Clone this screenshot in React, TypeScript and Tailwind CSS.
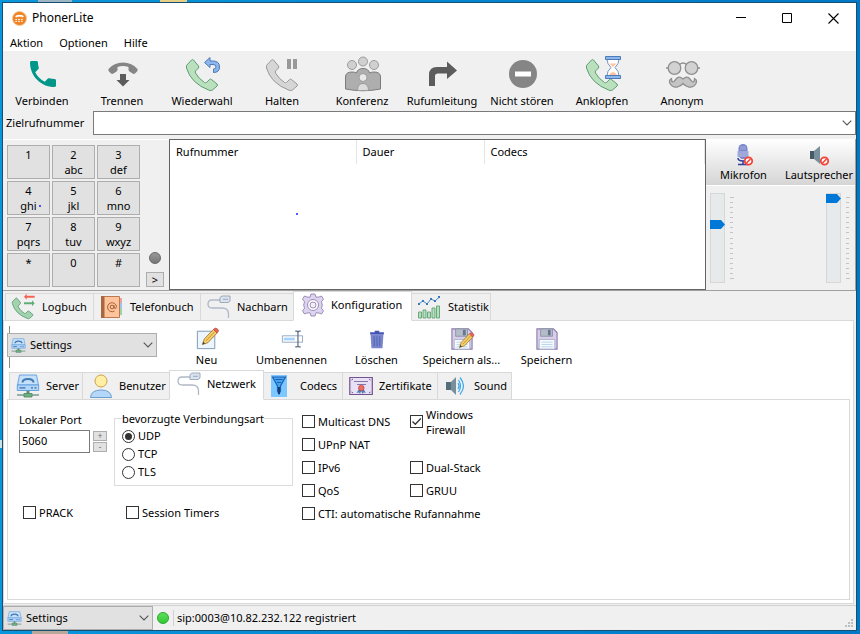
import { useState, type ReactNode } from "react";

const HANDSET =
  "M2.5 9.5 L7.5 4 Q8.5 3 9.500 4 L14.500 10 Q15 11 14.500 12 L11.500 15 Q11 16 11.500 17 Q15 23 20.500 26.500 Q21.500 27 22.500 26.500 L25.500 23.500 Q26.500 22.500 27.500 23.500 L33 28 Q34 29 33 30 L28.500 34 Q27 35 25 34.200 Q7 27.500 2.500 12 Z";

function Icon({ size, box, children, className = "" }: { size: number; box: number; children: ReactNode; className?: string }) {
  return (
    <svg width={size} height={size} viewBox={`0 0 ${box} ${box}`} className={`shrink-0 overflow-visible ${className}`} fill="none" aria-hidden="true">
      {children}
    </svg>
  );
}

const Handset = ({ fill, stroke }: { fill: string; stroke: string }) => <path d={HANDSET} fill={fill} stroke={stroke} strokeWidth="1" />;

const callActions: { label: string; icon: ReactNode }[] = [
  {
    label: "Verbinden",
    icon: (
      <g transform="translate(6 5) scale(1.445) translate(-3 -3)">
        <path
          fill="#009688"
          d="M6.620 10.790c1.440 2.830 3.760 5.140 6.590 6.590l2.200-2.200c.27-.27.67-.36 1.020-.24 1.120.37 2.330.57 3.570.57.55 0 1 .45 1 1V20c0 .55-.45 1-1 1-9.390 0-17-7.610-17-17 0-.55.45-1 1-1h3.500c.55 0 1 .45 1 1 0 1.250.2 2.450.57 3.570.11.35.03.74-.25 1.020l-2.200 2.200z"
        />
      </g>
    ),
  },
  {
    label: "Trennen",
    icon: (
      <>
        <path d="M4.500 13 Q10 6.500 19 6.500 T33.500 13 Q34 14.500 33 15.500 L31 17.500 Q30 18.300 28.500 17.500 L25.500 15.500 Q24.500 14.800 24.500 13.500 V11 Q19 9.200 13.500 11 V13.500 Q13.500 14.800 12.500 15.500 L9.500 17.500 Q8 18.300 7 17.500 L5 15.500 Q4 14.500 4.500 13 Z" fill="#858585" />
        <path d="M16 18h6v6h3.500L19 30.500 12.500 24H16z" fill="#5c5c5c" />
      </>
    ),
  },
  {
    label: "Wiederwahl",
    icon: (
      <>
        <Handset fill="#bae0bd" stroke="#5e9c76" />
        <path d="M20.500 6.500 L26 1.500 V5 H29 Q35.500 5 35.500 11 Q35.500 16.500 29.500 16.500 V13 Q32 13 32 11 Q32 8.500 29 8.500 H26 V11.500 Z" fill="#8bb7f0" stroke="#4e7ab5" />
      </>
    ),
  },
  {
    label: "Halten",
    icon: (
      <>
        <Handset fill="#d6d6d6" stroke="#999" />
        <path d="M23 3h4v10h-4zM29 3h4v10h-4z" fill="#999" />
      </>
    ),
  },
  {
    label: "Konferenz",
    icon: (
      <g stroke="#9b9b9b">
        <circle cx="8" cy="9" r="4.500" fill="#d0d0d0" />
        <circle cx="30" cy="9" r="4.500" fill="#d0d0d0" />
        <circle cx="19" cy="5.500" r="4.500" fill="#d0d0d0" />
        <path d="M1.500 33 V21 Q1.500 16 8 16 Q10.500 16 12.500 17 Q13.500 12.500 19 12.500 T25.500 17 Q27.500 16 30 16 Q36.500 16 36.500 21 V33 Q19 36.500 1.500 33Z" fill="#aeaeae" stroke="#7b7b7b" />
        <circle cx="19" cy="21.500" r="4" fill="#e9e9e9" />
        <path d="M13.500 34.500 Q13.500 27.500 19 27.500 T24.500 34.500 Z" fill="#dcdcdc" />
      </g>
    ),
  },
  {
    label: "Rufumleitung",
    icon: <path d="M5 30 V19 Q5 11 13 11 H23 V5.500 L33 14.500 23 23 V17.500 H14 Q11 17.500 11 20 V30Z" fill="#5c5c5c" />,
  },
  {
    label: "Nicht stören",
    icon: (
      <>
        <circle cx="19" cy="18" r="14" fill="#858585" />
        <path d="M11 15.500h16v5H11z" fill="#fff" />
      </>
    ),
  },
  {
    label: "Anklopfen",
    icon: (
      <>
        <Handset fill="#bae0bd" stroke="#5e9c76" />
        <path d="M23 3 H35 Q35 8 31 11.500 Q35 15 35 20 H23 Q23 15 27 11.500 Q23 8 23 3Z" fill="#fff" stroke="#7496c4" />
        <path d="M25.500 7.500h7L29 11zM25 19q4-6 8 0z" fill="#ffc49c" />
        <path d="M21.500 .5h15v3h-15zM21.500 19.500h15v3h-15z" fill="#8bb7f0" stroke="#4e7ab5" />
      </>
    ),
  },
  {
    label: "Anonym",
    icon: (
      <g stroke="#8f8f8f" strokeWidth="1.300" fill="#d2d2d2">
        <circle cx="10.500" cy="12" r="6.300" />
        <circle cx="27.500" cy="12" r="6.300" />
        <path d="M15.500 8.500 Q19 5.500 22.500 8.500 M2 12h2.500M33.500 12H36" fill="none" />
        <path d="M19 23 Q15.500 20 13 22 L10 25.500 Q7.500 27 7.500 22.500 Q4.500 24 6 27.500 Q8.500 31.800 13.500 31 Q17 30 19 27.500 Q21 30 24.500 31 Q29.500 31.800 32 27.500 Q33.500 24 30.500 22.500 Q30.500 27 28 25.500 L25 22 Q22.500 20 19 23Z" fill="#c4c4c4" />
      </g>
    ),
  },
];

const NetworkIcon = () => (
  <Icon size={24} box={24}>
    <path d="M13 5 H5 Q1 5 1 9 Q1 13 5 13 H15 Q21.500 13 21.500 19 V23" stroke="#b0b9c7" strokeWidth="1.300" />
    <path d="M13 2.500 L15 1 H23 V6 L21 7.500 H13Z" fill="#dbe4ee" stroke="#8c9aae" strokeWidth=".8" />
    <path d="M16 4.300h5" stroke="#8c9aae" strokeWidth=".8" />
  </Icon>
);

const ServerIcon = ({ size }: { size: number }) => (
  <Icon size={size} box={24}>
    <path d="M1 21h22" stroke="#7d9a94" strokeWidth="1.500" />
    <path d="M12 16v4" stroke="#5f8f71" strokeWidth="3" />
    <path d="M8 19.500h8v3.500H8z" fill="#6fb183" stroke="#4b8560" strokeWidth=".8" />
    <path d="M3.500 1h17L22.500 11h-21z" fill="#c5e0fb" stroke="#5b9bdc" strokeWidth=".9" />
    <path d="M1.300 11h21.400v5.500H1.300z" fill="#b3d5f8" stroke="#5b9bdc" strokeWidth=".9" />
    <path d="M6.500 8.500 Q6.500 5 12 5 T17.500 8.500" stroke="#4479b0" strokeWidth="2" />
    <path d="M3.500 13.800h6M18.500 13.800h2M15 13.800h2" stroke="#3670b2" strokeWidth="1.300" />
  </Icon>
);

const Disk = () => (
  <>
    <path d="M1 1h18l4 4v18H1z" fill="#d9cdea" stroke="#8d7aad" strokeWidth="1.200" />
    <path d="M5 1h13v8H5z" fill="#b3bcc8" stroke="#8b95a5" />
    <path d="M13 2h3v6h-3z" fill="#66758d" />
    <path d="M3.500 12.500h17V23h-17z" fill="#f5f9fd" stroke="#a9b5c8" />
    <path d="M6 15.500h12M6 18h12M6 20.500h12" stroke="#b7d3ea" />
  </>
);

const Pencil = () => (
  <>
    <path d="M7 18 L9 12 L19 1.500 L23 5.500 L13 16Z" fill="#f7cf69" stroke="#a37c35" />
    <path d="M19 1.500 Q21 -1 23.500 1 T23 5.500Z" fill="#e9635b" stroke="#b64e4a" strokeWidth=".7" />
    <path d="M7 18l1-3 2 2z" fill="#35404b" />
    <path d="M11 14l9.500-10" stroke="#bd8c32" />
  </>
);

const mainTabs: { label: string; width: string; icon: ReactNode }[] = [
  {
    label: "Logbuch",
    width: "w-[89px]",
    icon: (
      <Icon size={24} box={36}>
        <g transform="translate(-2 1)">
          <Handset fill="#a3d3ae" stroke="#3f8b5d" />
        </g>
        <path d="M18 2.500 L22 -2 V1 H34 V4 H22 V7Z" fill="#f26352" />
        <path d="M34 12.500 L30 8 V11 H18 V14 H30 V17Z" fill="#60ad7a" />
      </Icon>
    ),
  },
  {
    label: "Telefonbuch",
    width: "w-[108px]",
    icon: (
      <Icon size={24} box={24}>
        <path d="M18 3h4v5h-4z" fill="#e8a0a0" />
        <path d="M18 8h4v6h-4z" fill="#9ac6ed" />
        <path d="M18 14h4v6h-4z" fill="#9ed1a8" />
        <path d="M1.500 1.500h18v21h-18z" fill="#ffc49c" stroke="#bd784e" />
        <path d="M1 1h3.500v22H1z" fill="#a9673f" />
        <circle cx="12" cy="12" r="1.800" stroke="#a65f35" />
        <path d="M14 10v3q2 1.500 2.500-1.500A4.500 4.500 0 1 0 14.500 16" stroke="#a65f35" />
      </Icon>
    ),
  },
  { label: "Nachbarn", width: "w-[94px]", icon: <NetworkIcon /> },
  {
    label: "Konfiguration",
    width: "w-[119px]",
    icon: (
      <Icon size={24} box={24}>
        <path d="M10 1h4l1 3.200 3-.2 2.500-1 2 3.200-2 2.500.8 3.300-.8 3.300 2 2.500-2 3.200-2.500-1-3-.2-1 3.200h-4l-1-3.200-3 .2-2.500 1-2-3.200 2-2.500L2.700 12l.8-3.300-2-2.500 2-3.200L6 4l3 .2z" fill="#dcd5f2" stroke="#8b75a1" strokeWidth=".8" />
        <circle cx="12" cy="12" r="5.500" fill="#fff" stroke="#8b75a1" strokeWidth=".8" />
        <circle cx="12" cy="12" r="3" fill="#f2edfa" stroke="#8b75a1" strokeWidth=".8" />
      </Icon>
    ),
  },
  {
    label: "Statistik",
    width: "w-[80px]",
    icon: (
      <Icon size={24} box={24}>
        <path d="M.5 17h3v6h-3zM5 15h3v8H5zM9.500 17h3v6h-3zM14 13h3v10h-3zM18.500 11h3v12h-3z" fill="#b5dfbc" stroke="#60a176" strokeWidth=".9" />
        <path d="M.5 9 L5 6 9 9 13 4 17 6 21.500 2" stroke="#4788c7" />
        <path d="M0 8h2v2H0zM4 5h2v2H4zM8 8h2v2H8zM12 3h2v2h-2zM16 5h2v2h-2zM20 1h2v2h-2z" fill="#3a78ba" />
      </Icon>
    ),
  },
];

const settingsTabs: { label: string; width: string; icon: ReactNode }[] = [
  { label: "Server", width: "w-[74px]", icon: <ServerIcon size={24} /> },
  {
    label: "Benutzer",
    width: "w-[88px]",
    icon: (
      <Icon size={24} box={24}>
        <path d="M1.500 23.500 Q2 16 12 16 T22.500 23.500Z" fill="#b5d8fa" stroke="#6c9fce" />
        <circle cx="12" cy="7" r="6" fill="#ffeea3" stroke="#c9a44b" />
      </Icon>
    ),
  },
  { label: "Netzwerk", width: "w-[95px]", icon: <NetworkIcon /> },
  {
    label: "Codecs",
    width: "w-[80px]",
    icon: (
      <Icon size={24} box={24}>
        <path d="M1 1h16v22H1z" fill="#7cc7ff" />
        <path d="M2.500 3 L7.500 12 V17 L9 20 L10.500 17 V12 L15.500 3Z" fill="#42a5f5" stroke="#1f5faf" strokeWidth="1.200" />
        <path d="M5.500 5.500h7M7 8.500h4" stroke="#1f5faf" />
        <path d="M9 13v7" stroke="#143d7a" strokeWidth="2" />
      </Icon>
    ),
  },
  {
    label: "Zertifikate",
    width: "w-[96px]",
    icon: (
      <Icon size={24} box={24}>
        <path d="M.8 3.500h22.500v17H.8z" fill="#e8e0f4" stroke="#71518f" strokeWidth="1.200" />
        <path d="M2.500 6 4 5M21.500 6 20 5M2.500 18 4 19M21.500 18 20 19" stroke="#71518f" />
        <path d="M5 7.500h14M8 10.500h9" stroke="#8a76a4" />
        <path d="M10 15l-2.500 4 2.500-.5 1 1.500 1.200-3 1.300 3 1-1.500 2.300.5L14.500 15z" fill="#527db6" />
        <circle cx="12.300" cy="14" r="2.800" fill="#ed6d66" stroke="#b54640" strokeWidth=".7" />
      </Icon>
    ),
  },
  {
    label: "Sound",
    width: "w-[75px]",
    icon: (
      <Icon size={24} box={24}>
        <path d="M2 8h5v8H2z" fill="#546e7a" />
        <path d="M7 8l5-5v18l-5-5z" fill="#78909c" />
        <path d="M14 9q2 3 0 6M14.500 6q4 6 0 12M16 3.500q7 8.500 0 17" stroke="#3aa9e8" strokeWidth="1.200" />
      </Icon>
    ),
  },
];

const profileActions: { label: string; icon: ReactNode }[] = [
  {
    label: "Neu",
    icon: (
      <>
        <path d="M1.500 3.500h19v19h-19z" fill="#edf6fe" stroke="#7793ae" />
        <Pencil />
      </>
    ),
  },
  {
    label: "Umbenennen",
    icon: (
      <>
        <path d="M1.500 8.500h22v7h-22z" fill="#fff" stroke="#91a5be" />
        <path d="M3 10.500h12v3H3z" fill="#a6d3fb" />
        <path d="M18.500 4v16M15.500 3.500h2l1 1 1-1h2M15.500 20.500h2l1-1 1 1h2" stroke="#5c6c80" strokeWidth="1.300" />
      </>
    ),
  },
  {
    label: "Löschen",
    icon: (
      <>
        <path d="M5 7h14l-1 15H6z" fill="#7986cb" />
        <path d="M4.500 4.500h15V7h-15zM9.500 3h5v2h-5z" fill="#4255b5" />
        <path d="M9 9v11M12 9v11M15 9v11" stroke="#5564b8" strokeWidth="1.200" />
      </>
    ),
  },
  {
    label: "Speichern als...",
    icon: (
      <>
        <Disk />
        <g transform="translate(3 5) scale(.9)">
          <Pencil />
        </g>
      </>
    ),
  },
  { label: "Speichern", icon: <Disk /> },
];

const keypad = [
  ["1", ""],
  ["2", "abc"],
  ["3", "def"],
  ["4", "ghi"],
  ["5", "jkl"],
  ["6", "mno"],
  ["7", "pqrs"],
  ["8", "tuv"],
  ["9", "wxyz"],
  ["*", ""],
  ["0", ""],
  ["#", ""],
];

function Chevron({ className = "" }: { className?: string }) {
  return (
    <svg width="10" height="6" viewBox="0 0 10 6" fill="none" className={className} aria-hidden="true">
      <path d="M.7 .7 5 5 9.300 .7" stroke="#555" strokeWidth="1.100" />
    </svg>
  );
}

function ProfileSelect({ label, className }: { label: string; className: string }) {
  return (
    <div className={`relative flex h-6 shrink-0 items-center border border-[#adadad] bg-[#e1e1e1] ${className}`}>
      <span className="pointer-events-none absolute left-[3px]">
        <ServerIcon size={15} />
      </span>
      <select aria-label={label} className="h-full w-full appearance-none bg-transparent pl-[22px] outline-none">
        <option>Settings</option>
      </select>
      <Chevron className="pointer-events-none absolute right-[3px]" />
    </div>
  );
}

function Tabs({ items, active, onSelect, label }: { items: typeof mainTabs; active: string; onSelect: (s: string) => void; label: string }) {
  return (
    <div role="tablist" aria-label={label} className="relative z-10 flex h-[30px] items-end">
      {items.map((t) => (
        <button
          key={t.label}
          role="tab"
          aria-selected={t.label === active}
          onClick={() => onSelect(t.label)}
          className={`-mr-px flex shrink-0 items-center whitespace-nowrap border border-[#d9d9d9] ${t.width} ${
            t.label === active ? "z-10 h-[30px] gap-1.5 border-b-white bg-white pb-0.5 pl-[7px]" : "h-7 gap-1.5 bg-[#f0f0f0] pl-1.5"
          }`}
        >
          {t.icon}
          <span>{t.label}</span>
        </button>
      ))}
    </div>
  );
}

function Check({ label, defaultChecked = false, className = "" }: { label: string; defaultChecked?: boolean; className?: string }) {
  return (
    <label className={`flex items-center gap-[3px] leading-[15px] ${className}`}>
      <span className="relative size-[13px] shrink-0">
        <input type="checkbox" defaultChecked={defaultChecked} className="peer block size-[13px] appearance-none border border-[#333] bg-white" />
        <svg viewBox="0 0 13 13" className="pointer-events-none absolute inset-0 hidden peer-checked:block" fill="none" aria-hidden="true">
          <path d="M2.500 6.500 5.300 9.300 10.800 3.500" stroke="#333" strokeWidth="1.300" />
        </svg>
      </span>
      <span>{label}</span>
    </label>
  );
}

function Volume({ label, value }: { label: string; value: number }) {
  return (
    <div className="flex gap-[5px]">
      <input
        type="range"
        aria-label={label}
        defaultValue={value}
        className="h-[90px] w-[15px] appearance-none border border-[#d6d6d6] bg-[#e7eaea] [direction:rtl] [writing-mode:vertical-lr] [&::-webkit-slider-thumb]:h-[9px] [&::-webkit-slider-thumb]:w-[15px] [&::-webkit-slider-thumb]:appearance-none [&::-webkit-slider-thumb]:bg-[#0078d7] [&::-webkit-slider-thumb]:[clip-path:polygon(0_0,73%_0,100%_50%,73%_100%,0_100%)]"
      />
      <div className="mt-1 flex h-[82px] w-1 flex-col justify-between">
        {Array.from({ length: 17 }, (_, i) => (
          <span key={i} className={`h-px bg-[#c4c4c4] ${i === 0 || i === 16 ? "w-1" : "w-[3px]"}`} />
        ))}
      </div>
    </div>
  );
}

const Blocked = () => (
  <>
    <circle cx="17.500" cy="18" r="3.700" fill="#fff" stroke="#f44336" strokeWidth="1.800" />
    <path d="M15.500 20l4-4" stroke="#f44336" strokeWidth="1.600" />
  </>
);

export default function App() {
  const [tab, setTab] = useState("Konfiguration");
  const [section, setSection] = useState("Netzwerk");
  const [port, setPort] = useState(5060);

  return (
    <div className="relative flex min-h-screen flex-col overflow-hidden bg-linear-to-r from-[#0a96dc] to-[#0078c8] pt-0.5 pr-[3px] pb-[3px] pl-0.5 font-['Noto_Sans','Open_Sans',sans-serif] text-[11px] leading-4 text-black">
      <span className="absolute top-0 left-[38px] h-0.5 w-[34px] bg-[#9db4c4]" />
      <span className="absolute top-0 left-[160px] h-0.5 w-[27px] bg-[#e8cf87]" />
      <span className="absolute bottom-0 left-8 h-[3px] w-9 bg-[#b9a79c]" />
      <span className="absolute top-[440px] left-0 h-2 w-0.5 bg-[#c7e3ea]" />

      <main className="flex flex-1 flex-col border border-[#17506f] bg-[#f0f0f0]">
        <header className="flex h-[30px] shrink-0 items-center bg-white pl-[9px]">
          <Icon size={15} box={16}>
            <circle cx="8" cy="8" r="7.500" fill="#ef8323" stroke="#f7c79b" />
            <path d="M3.500 6.500Q3.500 4 8 4t4.500 2.500L10.500 7V6h-5v1z" fill="#fff" />
            <path d="M3.500 9h9M3.500 11h9" stroke="#fff" strokeDasharray="2 1" />
          </Icon>
          <h1 className="ml-[5px] flex-1 text-[12px]">PhonerLite</h1>
          <button aria-label="Minimieren" className="flex h-full w-[46px] items-center justify-center">
            <svg width="10" height="10" aria-hidden="true"><path d="M0 4.500h10" stroke="#000" /></svg>
          </button>
          <button aria-label="Maximieren" className="flex h-full w-[46px] items-center justify-center">
            <svg width="10" height="10" fill="none" aria-hidden="true"><path d="M.5 .5h9v9h-9z" stroke="#000" /></svg>
          </button>
          <button aria-label="Schließen" className="flex h-full w-[46px] items-center justify-center">
            <svg width="11" height="11" aria-hidden="true"><path d="M.5 .5l10 10M10.500 .5l-10 10" stroke="#000" strokeWidth="1.100" /></svg>
          </button>
        </header>

        <nav className="flex h-[18px] shrink-0 items-center gap-4 bg-white pt-0.5 pl-[7px]">
          <button>Aktion</button>
          <button>Optionen</button>
          <button>Hilfe</button>
        </nav>

        <div className="-ml-px flex h-[60px] shrink-0 pt-[5px]">
          {callActions.map((a) => (
            <button key={a.label} className="flex w-20 flex-col items-center gap-px whitespace-nowrap">
              <Icon size={36} box={36}>{a.icon}</Icon>
              <span>{a.label}</span>
            </button>
          ))}
        </div>

        <div className="flex h-6 shrink-0 items-center pl-[3px]">
          <label htmlFor="target" className="w-[87px] shrink-0">Zielrufnummer</label>
          <div className="flex h-6 flex-1 items-center border border-[#7a7a7a] bg-white">
            <input id="target" className="h-full min-w-0 flex-1 px-1 outline-none" />
            <button aria-label="Rufnummern anzeigen" className="px-[3px]"><Chevron /></button>
          </div>
        </div>

        <section className="mt-1 flex h-[152px] shrink-0 border-b border-[#a0a0a0]">
          <div className="flex w-[166px] shrink-0 gap-1.5 border-t border-white pt-[5px] pl-1">
            <div className="relative grid auto-rows-[34px] grid-cols-[43px_43px_43px] content-start gap-0.5">
              {keypad.map(([digit, letters]) => (
                <button key={digit} className="flex flex-col items-center border border-[#adadad] bg-[#e1e1e1] pt-px leading-[15px]">
                  <span>{digit}</span>
                  {letters && <span>{letters}</span>}
                </button>
              ))}
              <span className="absolute top-[60px] left-8 size-0.5 rounded-full bg-[#2020ff]" />
            </div>
            <div className="flex flex-col items-center justify-end gap-2 pb-[3px]">
              <span className="size-3 rounded-full border border-[#666] bg-linear-to-b from-[#999] to-[#777]" />
              <button aria-label="Erweitern" className="h-[15px] w-[18px] border border-[#adadad] bg-[#e1e1e1] leading-3">&gt;</button>
            </div>
          </div>

          <div className="relative flex-1 border border-[#646464] bg-white">
            <table className="w-full table-fixed border-collapse text-left">
              <thead>
                <tr className="h-6">
                  <th className="w-[186px] border-r border-[#e5e5e5] pl-1.5 font-normal">Rufnummer</th>
                  <th className="w-32 border-r border-[#e5e5e5] pl-1.5 font-normal">Dauer</th>
                  <th className="border-r border-[#e5e5e5] pl-1.5 font-normal">Codecs</th>
                </tr>
              </thead>
            </table>
            <span className="absolute top-[73px] left-[126px] size-0.5 rounded-full bg-[#2020ff]" />
          </div>

          <div className="w-[150px] shrink-0 border-r border-[#a0a0a0]">
            <div className="flex h-[47px] justify-between border-b border-white bg-linear-to-b from-white to-[#d5d5d5] pr-0.5 pl-3.5">
              <button className="flex flex-col items-center pt-1">
                <Icon size={24} box={24}>
                  <path d="M7 15q0 3 5 3t5-3M12 18v3M7 21.500h10" stroke="#303f9f" strokeWidth="1.500" />
                  <rect x="7.500" y="1" width="9" height="15" rx="4.500" fill="#7986cb" />
                  <path d="M6.500 8h11v6h-11z" fill="#9fa8da" />
                  <path d="M9 4h6M9 6h6" stroke="#a9b2e2" />
                  <Blocked />
                </Icon>
                <span>Mikrofon</span>
              </button>
              <button className="flex flex-col items-center pt-1">
                <Icon size={24} box={24}>
                  <path d="M3 8h4v8H3z" fill="#455a64" />
                  <path d="M7 8l6-5v18l-6-5z" fill="#78909c" />
                  <Blocked />
                </Icon>
                <span>Lautsprecher</span>
              </button>
            </div>
            <div className="flex justify-between pt-[7px] pr-[5px] pl-1">
              <Volume label="Mikrofonpegel" value={67} />
              <Volume label="Lautsprecherpegel" value={100} />
            </div>
          </div>
        </section>

        <section className="flex flex-1 flex-col pr-0.5">
          <div className="pl-0.5">
            <Tabs items={mainTabs} active={tab} onSelect={setTab} label="Ansichten" />
          </div>
          <div role="tabpanel" className="-mt-px flex flex-1 flex-col border border-[#d9d9d9] bg-white pr-[3px] pb-[3px] pl-[3px]">
            <div className="relative flex h-[49px] shrink-0 items-start pt-[5px]">
              <span className="absolute top-[5px] left-0.5 h-[42px] w-px bg-[#8a8a8a]" />
              <div className="relative pt-[7px]">
                <ProfileSelect label="Profil" className="w-[150px]" />
              </div>
              <div className="ml-[7px] flex">
                {profileActions.map((a) => (
                  <button key={a.label} className="flex w-[85px] flex-col items-center gap-0.5 pt-0.5 whitespace-nowrap">
                    <Icon size={22} box={24}>{a.icon}</Icon>
                    <span>{a.label}</span>
                  </button>
                ))}
              </div>
            </div>

            <div className="pl-0.5">
              <Tabs items={settingsTabs} active={section} onSelect={setSection} label="Einstellungen" />
            </div>
            <form className="-mt-px flex flex-1 items-start border border-[#d9d9d9] bg-white pt-2.5 pl-[11px]" onSubmit={(e) => e.preventDefault()}>
              <div className="w-[283px] shrink-0">
                <div className="flex items-start gap-[7px]">
                  <div className="w-[88px] pt-0.5">
                    <label htmlFor="port" className="block whitespace-nowrap">Lokaler Port</label>
                    <div className="mt-0.5 flex gap-[3px]">
                      <input id="port" value={port} onChange={(e) => setPort(Number(e.target.value) || 0)} className="h-[23px] w-[71px] border border-[#7a7a7a] px-0.5 pb-0.5 outline-none" />
                      <div className="flex flex-col gap-px pt-px">
                        <button type="button" aria-label="Port erhöhen" onClick={() => setPort(port + 1)} className="h-2.5 w-3.5 border border-[#adadad] bg-[#e1e1e1] text-[8px] leading-2 text-[#666]">+</button>
                        <button type="button" aria-label="Port verringern" onClick={() => setPort(port - 1)} className="h-2.5 w-3.5 border border-[#adadad] bg-[#e1e1e1] text-[8px] leading-2 text-[#666]">-</button>
                      </div>
                    </div>
                  </div>
                  <fieldset className="h-[76px] w-[179px] border border-[#dcdcdc] pl-[7px]">
                    <legend className="pt-px whitespace-nowrap">bevorzugte Verbindungsart</legend>
                    {["UDP", "TCP", "TLS"].map((p) => (
                      <label key={p} className="flex h-[18px] items-center gap-[3px]">
                        <input
                          type="radio"
                          name="transport"
                          defaultChecked={p === "UDP"}
                          className="size-[13px] appearance-none rounded-full border border-[#333] bg-white checked:bg-[#333] checked:bg-clip-content checked:p-0.5"
                        />
                        {p}
                      </label>
                    ))}
                  </fieldset>
                </div>
                <div className="mt-[19px] flex pl-1">
                  <Check label="PRACK" className="w-[103px]" />
                  <Check label="Session Timers" />
                </div>
              </div>
              <div className="grid auto-rows-[23px] grid-cols-[108px_108px]">
                <Check label="Multicast DNS" className="whitespace-nowrap" />
                <Check label="Windows Firewall" defaultChecked className="w-20" />
                <Check label="UPnP NAT" className="col-span-2" />
                <Check label="IPv6" />
                <Check label="Dual-Stack" />
                <Check label="QoS" />
                <Check label="GRUU" />
                <Check label="CTI: automatische Rufannahme" className="col-span-2" />
              </div>
            </form>
          </div>
        </section>

        <footer className="mt-px flex h-[25px] shrink-0 items-center border-t border-[#d0d0d0]">
          <ProfileSelect label="Aktives Profil" className="w-[150px]" />
          <span className="mx-1 size-3 rounded-full border border-[#2ba52b] bg-linear-to-b from-[#5be05b] to-[#32c832]" />
          <output className="flex-1 border-l border-[#d0d0d0] pl-[3px]">sip:0003@10.82.232.122 registriert</output>
          <svg width="9" height="9" className="mr-0.5 mb-0.5 self-end" aria-hidden="true">
            <path d="M6 0h2v2H6zM3 3h2v2H3zM6 3h2v2H6zM0 6h2v2H0zM3 6h2v2H3zM6 6h2v2H6z" fill="#bfbfbf" />
          </svg>
        </footer>
      </main>
    </div>
  );
}
